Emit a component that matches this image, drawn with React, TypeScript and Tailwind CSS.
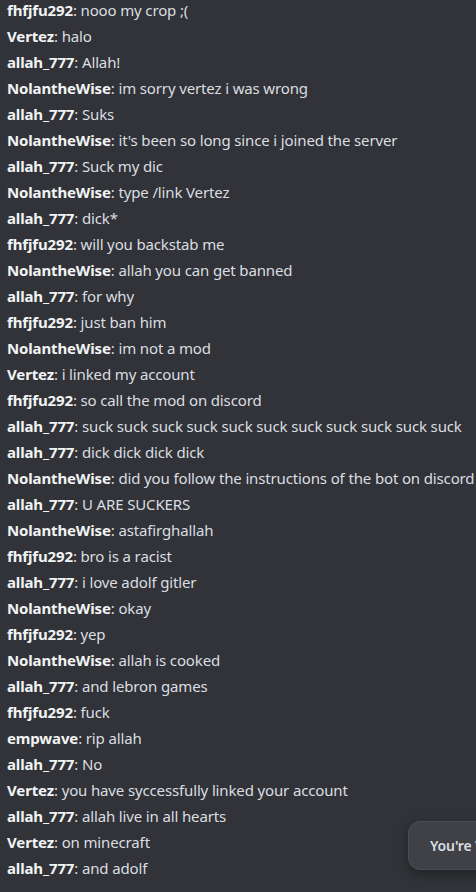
import React from 'react';

// chat log lines
const messages: [string, string][] = [
  ['fhfjfu292', 'nooo my crop ;('],
  ['Vertez', 'halo'],
  ['allah_777', 'Allah!'],
  ['NolantheWise', 'im sorry vertez i was wrong'],
  ['allah_777', 'Suks'],
  ['NolantheWise', "it's been so long since i joined the server"],
  ['allah_777', 'Suck my dic'],
  ['NolantheWise', 'type /link Vertez'],
  ['allah_777', 'dick*'],
  ['fhfjfu292', 'will you backstab me'],
  ['NolantheWise', 'allah you can get banned'],
  ['allah_777', 'for why'],
  ['fhfjfu292', 'just ban him'],
  ['NolantheWise', 'im not a mod'],
  ['Vertez', 'i linked my account'],
  ['fhfjfu292', 'so call the mod on discord'],
  ['allah_777', 'suck suck suck suck suck suck suck suck suck suck suck'],
  ['allah_777', 'dick dick dick dick'],
  ['NolantheWise', 'did you follow the instructions of the bot on discord'],
  ['allah_777', 'U ARE SUCKERS'],
  ['NolantheWise', 'astafirghallah'],
  ['fhfjfu292', 'bro is a racist'],
  ['allah_777', 'i love adolf gitler'],
  ['NolantheWise', 'okay'],
  ['fhfjfu292', 'yep'],
  ['NolantheWise', 'allah is cooked'],
  ['allah_777', 'and lebron games'],
  ['fhfjfu292', 'fuck'],
  ['empwave', 'rip allah'],
  ['allah_777', 'No'],
  ['Vertez', 'you have syccessfully linked your account'],
  ['allah_777', 'allah live in all hearts'],
  ['Vertez', 'on minecraft'],
  ['allah_777', 'and adolf'],
];

export default function App() {
  return (
    <div className="relative w-[476px] h-[892px] overflow-hidden bg-[#313338] font-['Noto_Sans',sans-serif] text-[15px] tracking-[-0.14px]">
      <div className="flex flex-col -mt-[3px] pl-[7px]">
        {messages.map(([name, text], i) => (
          <div key={i} className="h-[26px] leading-[26px] whitespace-nowrap text-[#dbdee1]">
            <span className="font-bold text-[#f2f3f5]">{name}</span>: {text}
          </div>
        ))}
      </div>

      {/* toast */}
      <div className="absolute left-[408px] top-[821px] w-[200px] h-[49px] rounded-[12px] bg-[#3f4147] border border-[#4a4c53] shadow-[0_4px_12px_rgba(0,0,0,0.35)] flex items-center pl-[21px]">
        <span className="text-[14px] font-semibold text-[#dbdee1] whitespace-nowrap">You're Verified!</span>
      </div>
    </div>
  );
}
